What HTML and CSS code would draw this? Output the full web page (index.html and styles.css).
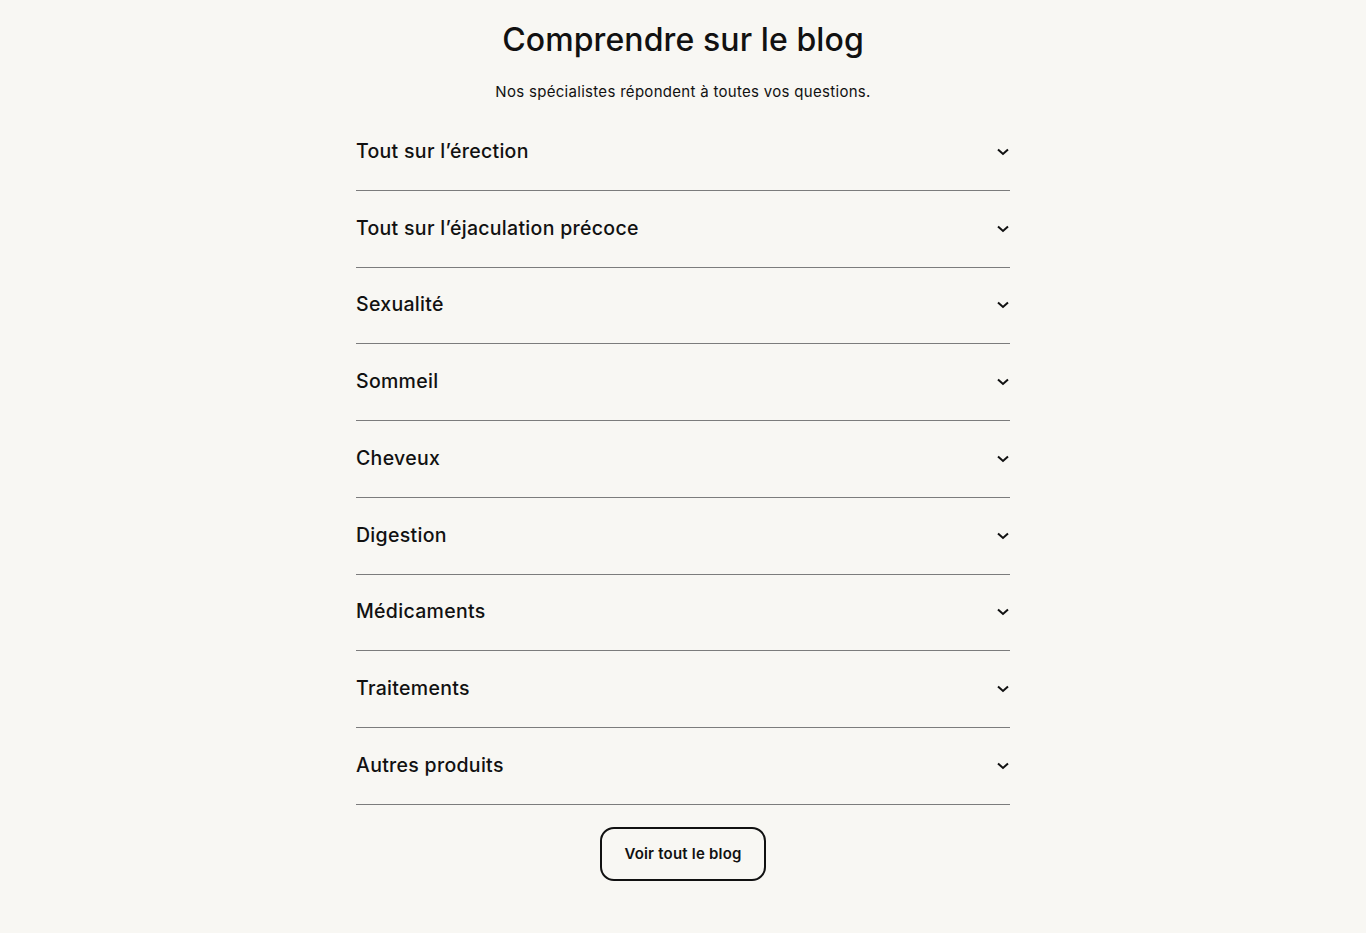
FILE: index.html
```html
<!DOCTYPE html>
<html lang="fr">
<head>
<meta charset="utf-8">
<link rel="stylesheet" href="styles.css">
</head>
<body>
<section class="blog">
  <h2 class="title">Comprendre sur le blog</h2>
  <p class="subtitle">Nos spécialistes répondent à toutes vos questions.</p>
  <ul class="list">
    <li class="item"><span>Tout sur l’érection</span><svg class="chev" viewBox="0 0 12 8"><path d="M1 1.5l5 4.5 5-4.5"/></svg></li>
    <li class="item"><span>Tout sur l’éjaculation précoce</span><svg class="chev" viewBox="0 0 12 8"><path d="M1 1.5l5 4.5 5-4.5"/></svg></li>
    <li class="item"><span>Sexualité</span><svg class="chev" viewBox="0 0 12 8"><path d="M1 1.5l5 4.5 5-4.5"/></svg></li>
    <li class="item"><span>Sommeil</span><svg class="chev" viewBox="0 0 12 8"><path d="M1 1.5l5 4.5 5-4.5"/></svg></li>
    <li class="item"><span>Cheveux</span><svg class="chev" viewBox="0 0 12 8"><path d="M1 1.5l5 4.5 5-4.5"/></svg></li>
    <li class="item"><span>Digestion</span><svg class="chev" viewBox="0 0 12 8"><path d="M1 1.5l5 4.5 5-4.5"/></svg></li>
    <li class="item"><span>Médicaments</span><svg class="chev" viewBox="0 0 12 8"><path d="M1 1.5l5 4.5 5-4.5"/></svg></li>
    <li class="item"><span>Traitements</span><svg class="chev" viewBox="0 0 12 8"><path d="M1 1.5l5 4.5 5-4.5"/></svg></li>
    <li class="item"><span>Autres produits</span><svg class="chev" viewBox="0 0 12 8"><path d="M1 1.5l5 4.5 5-4.5"/></svg></li>
  </ul>
  <div class="actions"><a class="btn" href="#">Voir tout le blog</a></div>
</section>
</body>
</html>
```
FILE: styles.css
```css
* { box-sizing: border-box; }
html, body { margin: 0; padding: 0; }
body {
  background: #f8f7f3;
  color: #111;
  font-family: Inter, "Noto Sans", sans-serif;
}
.blog {
  width: 654px;
  margin: 0 auto;
  padding-top: 20px;
  display: flex;
  flex-direction: column;
  align-items: stretch;
}
.title {
  margin: 0;
  text-align: center;
  font-size: 32px;
  font-weight: 500;
  line-height: 40px;
  letter-spacing: 0.1px;
}
.subtitle {
  margin: 22px 0 0;
  text-align: center;
  font-size: 15px;
  line-height: 20px;
  letter-spacing: 0.3px;
}
.list {
  list-style: none;
  margin: 12px 0 0;
  padding: 0;
}
.item {
  height: 76.75px;
  display: flex;
  align-items: center;
  justify-content: space-between;
  border-bottom: 1px solid #7c7c7c;
  font-size: 19.5px;
  font-weight: 500;
  letter-spacing: 0.3px;
  padding-right: 1px;
  padding-bottom: 2px;
}
.chev {
  width: 12px;
  height: 8px;
  fill: none;
  stroke: #111;
  stroke-width: 2;
  margin-top: 2px;
}
.actions {
  display: flex;
  justify-content: center;
  margin-top: 22px;
}
.btn {
  width: 166px;
  height: 54px;
  border: 2px solid #111;
  border-radius: 14px;
  display: flex;
  align-items: center;
  justify-content: center;
  color: #111;
  text-decoration: none;
  font-size: 15px;
  font-weight: 600;
  letter-spacing: 0.2px;
}
```
